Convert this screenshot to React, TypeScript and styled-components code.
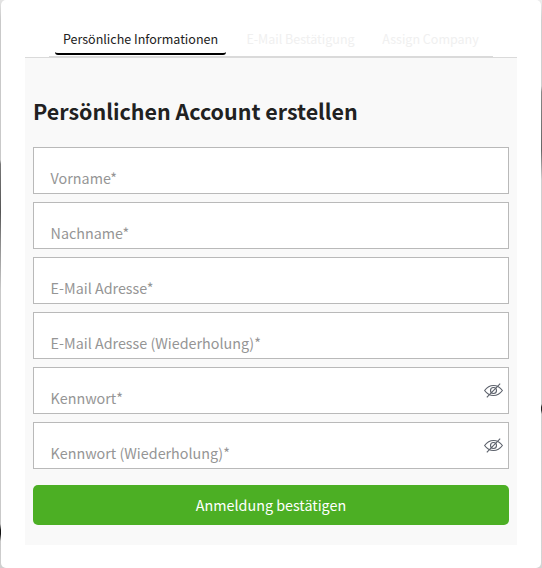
import React from "react";
import styled, { createGlobalStyle } from "styled-components";

const GlobalStyle = createGlobalStyle`
  *, *::before, *::after { box-sizing: border-box; }
  body {
    margin: 0;
    overflow: hidden;
    font-family: "Source Sans Pro", "Noto Sans CJK SC", "Noto Sans", sans-serif;
    color: #212121;
  }
`;

const Backdrop = styled.div`
  height: 568px;
  padding: 0 1px;
  background:
    linear-gradient(#e4e4e4 0, #c9c9c9 20px, #c9c9c9 160px, #777 164px, #555 212px, #888 240px, #c9c9c9 290px,
      #c9c9c9 524px, #111 530px, #111 534px, #c9c9c9 541px, #d0d0d0 568px) left / 50% 100% no-repeat,
    linear-gradient(#ececec 0, #cfcfcf 20px, #cfcfcf 86px, #888 92px, #666 150px, #cfcfcf 180px,
      #cfcfcf 404px, #222 407px, #222 410px, #cfcfcf 414px, #d4d4d4 568px) right / 50% 100% no-repeat;
`;

const Card = styled.main`
  height: 568px;
  padding: 24px 24px 23px;
  border-radius: 5px;
  background: #fff;
`;

const TabHeader = styled.header`
  height: 34px;
  padding: 0 24px;
  border-bottom: 1px solid #dadada;
`;

const TabList = styled.nav`
  display: flex;
  height: 33px;
  padding: 0 6px;
  border-bottom: 1px solid #dadada;
`;

const Tab = styled.button<{ $active?: boolean; $width: number; $gap?: number }>`
  width: ${(p) => p.$width}px;
  height: 31px;
  margin: 0 ${(p) => p.$gap ?? 0}px 0 0;
  padding: 0;
  border: 0;
  border-bottom: 2px solid ${(p) => (p.$active ? "#000" : "transparent")};
  border-radius: 3px;
  background: none;
  font: 400 12.53px/30px "Noto Sans CJK SC", sans-serif;
  white-space: nowrap;
  color: ${(p) => (p.$active ? "#212121" : "#f0f0f0")};
`;

const Panel = styled.section`
  height: 487px;
  padding: 35px 8px 20px;
  background: #f9f9f9;
`;

const Title = styled.h1`
  margin: 0 0 18px;
  font-size: 21.45px;
  line-height: 36px;
  font-weight: 700;
  white-space: nowrap;
`;

const Form = styled.form`
  display: flex;
  flex-direction: column;
  gap: 8px;
`;

const Field = styled.label`
  display: flex;
  align-items: center;
  justify-content: space-between;
  height: 47px;
  padding: 0 5px 0 16.6px;
  border: 1px solid #b9b9b9;
  background: #fff;
`;

const FieldLabel = styled.span`
  padding-top: 15px;
  font-size: 14.33px;
  line-height: 24px;
  color: #959595;
`;

const EyeIcon = styled.svg`
  width: 19px;
  height: 16px;
  fill: none;
  stroke: #5c616b;
  stroke-width: 1.1;
`;

const Submit = styled.button`
  height: 40px;
  margin-top: 8px;
  padding: 0;
  border: 0;
  border-radius: 5px;
  background: #4caf24;
  color: #fff;
  font: 400 14.33px/40px "Noto Sans CJK SC", sans-serif;
`;

const fields = [
  { label: "Vorname*" },
  { label: "Nachname*" },
  { label: "E-Mail Adresse*" },
  { label: "E-Mail Adresse (Wiederholung)*" },
  { label: "Kennwort*", secret: true },
  { label: "Kennwort (Wiederholung)*", secret: true },
];

const HiddenEye = () => (
  <EyeIcon viewBox="0 0 19 16" aria-hidden="true">
    <path d="M.6 7.5C3 4.2 6 2.5 9.5 2.5S16 4.2 18.4 7.5C16 10.8 13 12.5 9.5 12.5S3 10.8.6 7.5Z" />
    <circle cx="9.5" cy="7.5" r="3" />
    <path d="M2.8 14.3 16.2.7" />
  </EyeIcon>
);

export default function App() {
  return (
    <>
      <GlobalStyle />
      <Backdrop>
        <Card>
          <TabHeader>
            <TabList>
              <Tab $active $width={171} $gap={12}>Persönliche Informationen</Tab>
              <Tab $width={125} $gap={11}>E-Mail Bestätigung</Tab>
              <Tab $width={113}>Assign Company</Tab>
            </TabList>
          </TabHeader>
          <Panel>
            <Title>Persönlichen Account erstellen</Title>
            <Form>
              {fields.map((field) => (
                <Field key={field.label}>
                  <FieldLabel>{field.label}</FieldLabel>
                  {field.secret && <HiddenEye />}
                </Field>
              ))}
              <Submit type="button">Anmeldung bestätigen</Submit>
            </Form>
          </Panel>
        </Card>
      </Backdrop>
    </>
  );
}
